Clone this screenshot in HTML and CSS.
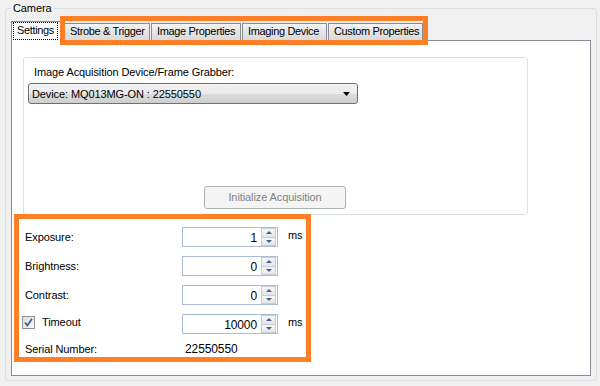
FILE: index.html
```html
<!DOCTYPE html>
<html>
<head>
<meta charset="utf-8">
<link rel="stylesheet" href="styles.css">
</head>
<body>
<div class="camera">
  <span class="legend">Camera</span>
  <div class="tabstrip">
    <div class="tab selected"><span class="focus">Settings</span></div>
    <div class="tab w-strobe">Strobe &amp; Trigger</div>
    <div class="tab w-image">Image Properties</div>
    <div class="tab w-imaging">Imaging Device</div>
    <div class="tab w-custom">Custom Properties</div>
  </div>
  <div class="page">
    <div class="group">
      <div class="group-label">Image Acquisition Device/Frame Grabber:</div>
      <div class="combo">
        <span>Device: MQ013MG-ON : 22550550</span>
        <svg class="arrow" width="8" height="4" viewBox="0 0 8 4"><path d="M0 0H7L3.5 4Z" fill="#000"/></svg>
      </div>
      <div class="btn">Initialize Acquisition</div>
    </div>
    <div class="fields">
      <div class="label">Exposure:</div>
      <div class="spin"><span class="val">1</span><span class="spinbtns"><span class="sb up"></span><span class="sb down"></span></span></div>
      <div class="unit">ms</div>

      <div class="label">Brightness:</div>
      <div class="spin"><span class="val">0</span><span class="spinbtns"><span class="sb up"></span><span class="sb down"></span></span></div>
      <div class="unit"></div>

      <div class="label">Contrast:</div>
      <div class="spin"><span class="val">0</span><span class="spinbtns"><span class="sb up"></span><span class="sb down"></span></span></div>
      <div class="unit"></div>

      <div class="label check-label"><span class="checkbox"><svg width="11" height="11" viewBox="0 0 11 11"><path d="M2 5.5L4.3 8.5L9 1.8" fill="none" stroke="#4a5d9a" stroke-width="1.8"/></svg></span>Timeout</div>
      <div class="spin"><span class="val">10000</span><span class="spinbtns"><span class="sb up"></span><span class="sb down"></span></span></div>
      <div class="unit">ms</div>

      <div class="label serial">Serial Number:</div>
      <div class="serial-val">22550550</div>
      <div class="unit"></div>
    </div>
  </div>
</div>
<div class="hl hl-tabs"></div>
<div class="hl hl-fields"></div>
</body>
</html>
```
FILE: styles.css
```css
* { box-sizing: border-box; }
html, body { margin: 0; padding: 0; }
body {
  width: 600px;
  height: 386px;
  background: #f0f0f0;
  font-family: "Liberation Sans", Arial, sans-serif;
  font-size: 11px;
  letter-spacing: -0.1px;
  color: #000;
  position: relative;
  overflow: hidden;
}
.camera {
  position: relative;
  margin: 8px 0 0 5px;
  width: 592px;
  height: 373px;
  border: 1px solid #d5dfe5;
  border-radius: 3px;
  padding: 12px 0 0 5px;
}
.legend {
  position: absolute;
  top: -8px;
  left: 5px;
  padding: 0 2px;
  background: #f0f0f0;
  line-height: 14px;
}
.tabstrip {
  display: flex;
  align-items: flex-end;
  height: 19px;
  position: relative;
  z-index: 2;
}
.tab {
  height: 17px;
  border: 1px solid #898c95;
  border-bottom: none;
  background: linear-gradient(#f3f3f3, #e4e4e4 50%, #d9d9d9);
  margin-right: 1px;
  padding: 0 0 0 5px;
  line-height: 15px;
  white-space: nowrap;
  letter-spacing: -0.35px;
  overflow: hidden;
}
.tab.selected {
  height: 20px;
  width: 52px;
  background: #fff;
  margin-right: 1px;
  margin-bottom: -1px;
  padding: 1px 0 0 2px;
  line-height: 14px;
  overflow: visible;
}
.focus {
  display: inline-block;
  outline: 1px dotted #000;
  outline-offset: 0;
  padding: 0 3px 0 3px;
  height: 16px;
  line-height: 15px;
}
.w-strobe { width: 86px; }
.w-image { width: 90px; }
.w-imaging { width: 85px; }
.w-custom { width: 95px; }
.page {
  width: 580px;
  height: 336px;
  background: #fff;
  border: 1px solid #898c95;
  padding: 16px 0 0 11px;
}
.group {
  width: 505px;
  height: 158px;
  border: 1px solid #d8dfe4;
  border-radius: 3px;
  padding: 8px 0 0 4px;
}
.group-label {
  line-height: 13px;
  padding-left: 6px;
}
.combo {
  margin-top: 4px;
  width: 330px;
  height: 21px;
  border: 1px solid #707070;
  border-radius: 3px;
  background: linear-gradient(#f2f2f2, #ebebeb 50%, #dddddd 51%, #cfcfcf);
  display: flex;
  align-items: center;
  justify-content: space-between;
  padding: 0 6px 0 3px;
}
.arrow { display: block; }
.btn {
  margin: 82px 0 0 176px;
  width: 142px;
  height: 23px;
  border: 1px solid #adb2b5;
  border-radius: 3px;
  background: #f4f4f4;
  color: #838383;
  text-align: center;
  line-height: 20px;
}
.fields {
  margin-top: 12px;
  padding-left: 2px;
  display: grid;
  grid-template-columns: 157px 96px auto;
  grid-auto-rows: 20px;
  row-gap: 9px;
  align-items: center;
}
.label { line-height: 13px; }
.unit { padding-left: 10px; align-self: start; line-height: 16px; }
.check-label {
  display: flex;
  align-items: center;
  margin-left: -3px;
  margin-top: -3px;
}
.checkbox {
  width: 13px;
  height: 13px;
  border: 1px solid #8e8f8f;
  background: linear-gradient(135deg, #dcdcdc, #fafafa);
  margin-right: 7px;
  display: flex;
  align-items: center;
  justify-content: center;
}
.checkbox svg { display: block; }
.spin {
  height: 20px;
  border: 1px solid #abbcd4;
  display: flex;
  align-items: center;
  justify-content: flex-end;
  padding: 1px 1px 1px 0;
  font-size: 12px;
}
.val { padding-right: 4px; line-height: 16px; padding-top: 2px; }
.spinbtns {
  width: 15px;
  height: 18px;
  display: flex;
  flex-direction: column;
}
.sb {
  flex: 1;
  border: 1px solid #c6cdd6;
  background: linear-gradient(#f6f6f6, #e3e6ea);
  position: relative;
}
.sb.down { border-top: none; }
.sb::after {
  content: "";
  position: absolute;
  left: 4px;
  border-left: 3px solid transparent;
  border-right: 3px solid transparent;
}
.sb.up::after { top: 2px; border-bottom: 3px solid #4c5e86; }
.sb.down::after { top: 2px; border-top: 3px solid #4c5e86; }
.serial, .serial-val { align-self: start; line-height: 13px; }
.serial-val { padding-left: 3px; font-size: 12px; }
.hl {
  position: absolute;
  border: 5px solid #ff7f27;
  z-index: 5;
}
.hl-tabs { left: 60px; top: 16px; width: 368px; height: 29px; }
.hl-fields { left: 14px; top: 214px; width: 297px; height: 148px; }
```
